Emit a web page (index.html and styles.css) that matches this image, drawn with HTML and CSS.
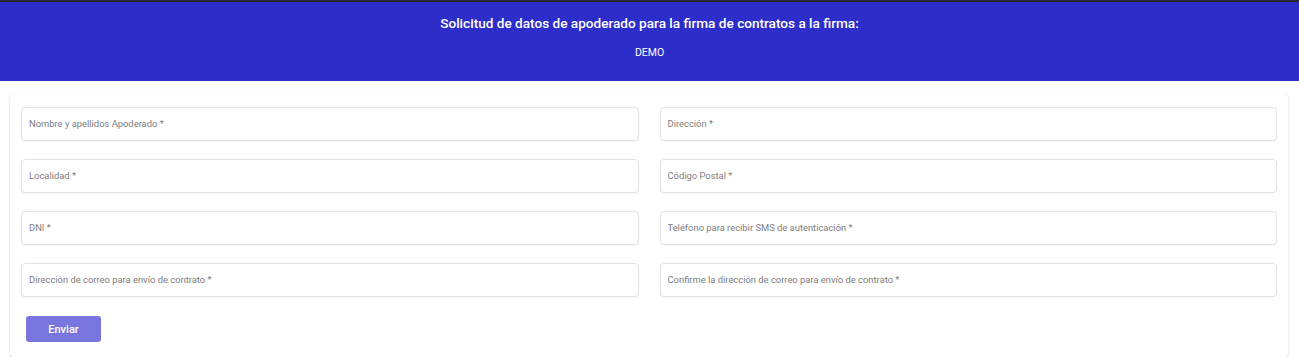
FILE: index.html
```html
<!DOCTYPE html>
<html lang="es">
<head>
    <meta charset="UTF-8">
    <meta name="viewport" content="width=device-width,initial-scale=1">
    <title>Solicitud de datos de apoderado</title>
    <link rel="stylesheet" href="styles.css">
</head>
<body>
    <div class="header">
        <div class="title">Solicitud de datos de apoderado para la firma de contratos a la firma:</div>
        <div class="company">DEMO</div>
    </div>
    <form class="card" onsubmit="return false">
        <div class="fields">
            <div class="field"><input type="text" placeholder="Nombre y apellidos Apoderado *"></div>
            <div class="field"><input type="text" placeholder="Dirección *"></div>
            <div class="field"><input type="text" placeholder="Localidad *"></div>
            <div class="field"><input type="text" placeholder="Código Postal *"></div>
            <div class="field"><input type="text" placeholder="DNI *"></div>
            <div class="field"><input type="text" placeholder="Teléfono para recibir SMS de autenticación *"></div>
            <div class="field"><input type="email" placeholder="Dirección de correo para envío de contrato *"></div>
            <div class="field"><input type="email" placeholder="Confirme la dirección de correo para envío de contrato *"></div>
        </div>
        <button class="button" type="submit">Enviar</button>
    </form>
</body>
</html>
```

FILE: styles.css
```css
body {
    margin: 0;
    font-family: Roboto, "Liberation Sans", Arial, sans-serif;
    background: #fff;
    overflow: hidden;
}
.header {
    background-color: #2d2dc9;
    border-top: 2px solid #26262e;
    height: 79px;
    color: #fff;
    text-align: center;
    box-sizing: content-box;
}
.title {
    font-size: 13.6px;
    font-weight: 500;
    padding-top: 12px;
    line-height: 18px;
}
.company {
    font-size: 10.5px;
    margin-top: 14px;
    line-height: 14px;
}
.card {
    margin: 12px 11px 0 10px;
    padding: 14px 11px 15px 11px;
    background: #fff;
    border-radius: 4px;
    box-shadow: 0 1px 2px rgba(0, 0, 0, 0.18), 0 0 1px rgba(0, 0, 0, 0.08);
}
.fields {
    display: grid;
    grid-template-columns: 1fr 1fr;
    column-gap: 21px;
    row-gap: 18px;
}
.field input {
    display: block;
    width: 100%;
    height: 34px;
    box-sizing: border-box;
    padding: 0 7px 1px;
    border: 1px solid #e2e2e2;
    border-radius: 4px;
    box-shadow: 0 1px 1px rgba(0, 0, 0, 0.04);
    font-family: inherit;
    font-size: 9.4px;
    color: #333;
    outline: none;
}
.field input::placeholder {
    color: #7d7d7d;
}
.button {
    margin: 19px 0 0 5px;
    width: 75px;
    height: 26px;
    border: none;
    border-radius: 3px;
    background-color: #7975df;
    color: #fff;
    font-family: inherit;
    font-size: 11px;
    font-weight: 500;
    cursor: pointer;
}
```
